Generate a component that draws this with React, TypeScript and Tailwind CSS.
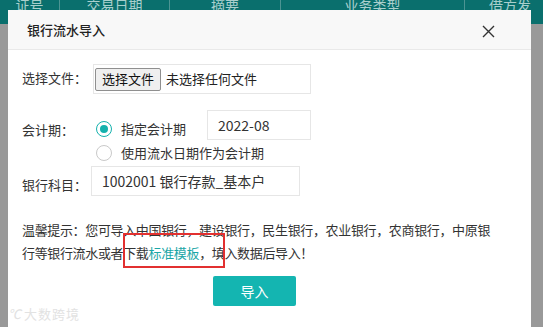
import React from "react";

const font = { fontFamily: '"Noto Sans CJK SC", "Noto Sans", sans-serif' };

const columns = [
  { label: "证号", width: "w-[60px]" },
  { label: "交易日期", width: "w-[110px]" },
  { label: "摘要", width: "w-[111px]" },
  { label: "业务类型", width: "w-[184px]" },
  { label: "借方发", width: "w-[90px]" },
];

function Radio({ checked }: { checked: boolean }) {
  return (
    <span
      className={
        checked
          ? "flex h-4 w-4 shrink-0 items-center justify-center rounded-full border border-[#14b1ad] bg-white"
          : "flex h-4 w-4 shrink-0 items-center justify-center rounded-full border border-[#c9c9c9] bg-white"
      }
    >
      {checked && <span className="h-2 w-2 rounded-full bg-[#14b1ad]" />}
    </span>
  );
}

export default function App() {
  return (
    <div
      className="relative h-[327px] w-[543px] overflow-hidden bg-[#999999] text-[13px] text-[#333]"
      style={font}
    >
      {/* 背景の表ヘッダー（マスク越し） */}
      <div className="flex h-6 bg-[#0a6f6d] text-[14px] leading-[16px] text-[#a9cfcd]">
        {columns.map((c, i) => (
          <div
            key={c.label}
            className={`${c.width} flex shrink-0 justify-center ${i < columns.length - 1 ? "border-r border-[#4d9493]" : ""}`}
          >
            <span className="-mt-[3px]">{c.label}</span>
          </div>
        ))}
      </div>

      {/* ダイアログ */}
      <div className="absolute left-[8px] top-[10px] h-[330px] w-[523px] bg-white">
        <div className="flex h-[40px] items-center justify-between border-b border-[#e9e9e9] bg-[#f8f8f8] pl-[19px] pr-[36px]">
          <span className="mt-[1px] text-[13px] font-medium text-[#222]">银行流水导入</span>
          <svg width="13" height="13" viewBox="0 0 13 13" className="mt-[3px]">
            <path d="M1 1 L12 12 M12 1 L1 12" stroke="#333" strokeWidth="1.4" />
          </svg>
        </div>

        <div className="px-[14px] pt-[14px]">
          {/* 选择文件 */}
          <div className="flex">
            <span className="mt-[4px] w-[71px] leading-[20px]">选择文件：</span>
            <div className="flex h-[30px] w-[218px] items-center border border-[#e6e6e6] pl-[1px]">
              <button className="h-[23px] rounded-[2px] border border-[#8f8f8f] bg-[#efefef] px-[6px] text-[13px] leading-[20px] text-[#111]">
                选择文件
              </button>
              <span className="ml-[5px] text-[13px] text-[#222]">未选择任何文件</span>
            </div>
          </div>

          {/* 会计期 */}
          <div className="mt-[16px] flex">
            <span className="mt-[10px] w-[74px] leading-[20px]">会计期：</span>
            <div className="flex flex-col">
              <div className="flex items-start">
                <label className="mt-[10px] flex w-[111px] items-center gap-[9px] leading-[17px]">
                  <Radio checked />
                  <span>指定会计期</span>
                </label>
                <div className="flex h-[30px] w-[104px] items-center border border-[#e6e6e6] pl-[10px] text-[14px]">
                  2022-08
                </div>
              </div>
              <label className="mt-[4px] flex items-center gap-[9px] leading-[17px]">
                <Radio checked={false} />
                <span>使用流水日期作为会计期</span>
              </label>
            </div>
          </div>

          {/* 银行科目 */}
          <div className="mt-[5px] flex">
            <span className="mt-[9px] w-[69px] leading-[20px]">银行科目：</span>
            <div className="flex h-[30px] w-[209px] items-center border border-[#e6e6e6] pl-[10px] text-[14px]">
              1002001 银行存款_基本户
            </div>
          </div>

          {/* 温馨提示 */}
          <p className="mt-[22px] w-[490px] leading-[23px] tracking-[-0.35px]">
            温馨提示：您可导入中国银行，建设银行，民生银行，农业银行，农商银行，中原银
            <br />
            行等银行流水或者下载<span className="text-[#1ba6a6]">标准模板</span>，填入数据后导入！
          </p>

          <button className="ml-[191px] mt-[12px] flex h-[30px] w-[83px] items-center justify-center rounded-[2px] bg-[#14b5b1] text-[14px] text-white">
            导入
          </button>
        </div>

        {/* 注釈の赤枠 */}
        <div className="absolute left-[115px] top-[223px] h-[35px] w-[102px] border-2 border-[#e23030]" />

        {/* 透かし */}
        <div className="absolute left-[0px] top-[294px] flex items-center gap-[3px] text-[13px] text-[#e2e2e2]">
          <span className="italic">℃</span>
          <span className="tracking-[1px]">大数跨境</span>
        </div>
      </div>
    </div>
  );
}
